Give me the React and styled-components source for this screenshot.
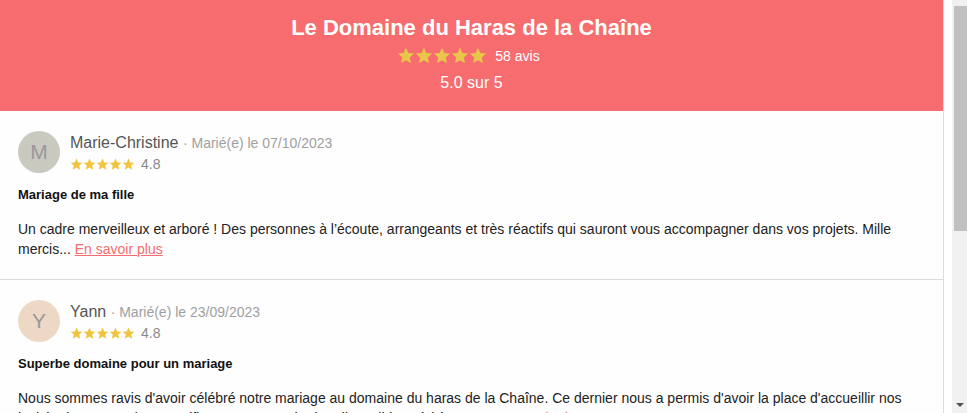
import React from "react";
import styled, {createGlobalStyle} from "styled-components";

const GlobalStyle = createGlobalStyle`
  html, body {
    margin: 0;
    padding: 0;
    overflow: hidden;
    background: #fff;
    font-family: "Liberation Sans", Arial, sans-serif;
  }
`;

const reviews = [
    {
        initial: "M",
        avatar: "#c9c9c0",
        name: "Marie-Christine",
        date: "07/10/2023",
        rating: "4.8",
        title: "Mariage de ma fille",
        text: "Un cadre merveilleux et arboré ! Des personnes à l’écoute, arrangeants et très réactifs qui sauront vous accompagner dans vos projets. Mille mercis...",
        more: true
    },
    {
        initial: "Y",
        avatar: "#ecd8c5",
        name: "Yann",
        date: "23/09/2023",
        rating: "4.8",
        title: "Superbe domaine pour un mariage",
        text: "Nous sommes ravis d'avoir célébré notre mariage au domaine du haras de la Chaîne. Ce dernier nous a permis d'avoir la place d'accueillir nos invités dans un cadre magnifique, avec une équipe disponible et à l'écoute...",
        more: true
    }
];

const Frame = styled.div`
  display: flex;
  height: 413px;
  overflow: hidden;
`;

const Viewport = styled.div`
  flex: 1;
  overflow: hidden;
`;

const ScrollBar = styled.div`
  width: 15px;
  flex-shrink: 0;
  background: #f1f1f1;
  display: flex;
  flex-direction: column;
  align-items: flex-end;
`;

const Thumb = styled.div`
  width: 13px;
  height: 225px;
  margin-top: 6px;
  background: #c1c1c1;
`;

const Arrow = styled.div`
  margin: auto 3px 6px 0;
  width: 0;
  height: 0;
  border-left: 4px solid transparent;
  border-right: 4px solid transparent;
  border-top: 4px solid #505050;
`;

const Widget = styled.div`
  width: 944px;
  box-sizing: border-box;
  border-right: 1px solid #dcdcdc;
  background: #fefefe;
  min-height: 413px;
`;

const Header = styled.div`
  background: #f76c6e;
  color: #fff;
  text-align: center;
  padding: 14px 0 16px;
  height: 111px;
  box-sizing: border-box;
`;

const Title = styled.div`
  font-size: 22px;
  font-weight: 700;
  line-height: 28px;
`;

const StarLine = styled.div`
  display: flex;
  align-items: center;
  justify-content: center;
  gap: 8px;
  margin-top: 4px;
  padding-right: 6px;
  font-size: 14px;
  line-height: 20px;
`;

const Stars = styled.span`
  display: inline-flex;
  gap: ${p => p.$gap}px;
`;

const Score = styled.div`
  font-size: 16px;
  line-height: 20px;
  margin-top: 7px;
`;

const Review = styled.div`
  padding: 20px 18px;
  border-bottom: 1px solid #dcdcdc;
`;

const Top = styled.div`
  display: flex;
  gap: 10px;
`;

const Avatar = styled.div`
  width: 42px;
  height: 42px;
  border-radius: 50%;
  background: ${p => p.$bg};
  color: #999;
  font-size: 21px;
  display: flex;
  align-items: center;
  justify-content: center;
  flex-shrink: 0;
`;

const Meta = styled.div`
  display: flex;
  flex-direction: column;
  padding-top: 2px;
`;

const Name = styled.div`
  font-size: 16px;
  line-height: 20px;
  color: #555;
`;

const DateText = styled.span`
  font-size: 14px;
  color: #a0a0a0;
`;

const Rating = styled.div`
  display: flex;
  align-items: center;
  gap: 6px;
  font-size: 14px;
  color: #888;
  line-height: 18px;
  margin-top: 2px;
`;

const ReviewTitle = styled.div`
  font-size: 13px;
  font-weight: 700;
  color: #111;
  line-height: 16px;
  margin-top: 14px;
`;

const Body = styled.p`
  font-size: 14px;
  line-height: 20px;
  color: #222;
  margin: 16px 0 0;
`;

const More = styled.a`
  color: #f76c6e;
  text-decoration: underline;
  cursor: pointer;
`;

const Star = ({size, color}) => (
    <svg width={size} height={size} viewBox="0 0 24 24">
        <path fill={color}
              d="M12 1l3.2 7.1 7.6.7-5.8 5.1 1.8 7.6L12 17.6l-6.8 3.9 1.8-7.6-5.8-5.1 7.6-.7z"/>
    </svg>
);

const StarRow = ({size, gap, color}) => (
    <Stars $gap={gap}>
        {[0, 1, 2, 3, 4].map(i => <Star key={i} size={size} color={color}/>)}
    </Stars>
);

const App = () => {
    return (
        <>
            <GlobalStyle/>
            <Frame>
                <Viewport>
                    <Widget>
                        <Header>
                            <Title>Le Domaine du Haras de la Chaîne</Title>
                            <StarLine>
                                <StarRow size={18} gap={0} color="#eac54b"/>
                                <span>58 avis</span>
                            </StarLine>
                            <Score>5.0 sur 5</Score>
                        </Header>
                        {reviews.map(r => (
                            <Review key={r.name}>
                                <Top>
                                    <Avatar $bg={r.avatar}>{r.initial}</Avatar>
                                    <Meta>
                                        <Name>
                                            {r.name} <DateText>· Marié(e) le {r.date}</DateText>
                                        </Name>
                                        <Rating>
                                            <StarRow size={13} gap={0} color="#f0c43c"/>
                                            {r.rating}
                                        </Rating>
                                    </Meta>
                                </Top>
                                <ReviewTitle>{r.title}</ReviewTitle>
                                <Body>
                                    {r.text} {r.more && <More>En savoir plus</More>}
                                </Body>
                            </Review>
                        ))}
                    </Widget>
                </Viewport>
                <ScrollBar>
                    <Thumb/>
                    <Arrow/>
                </ScrollBar>
            </Frame>
        </>
    )
}
export default App
